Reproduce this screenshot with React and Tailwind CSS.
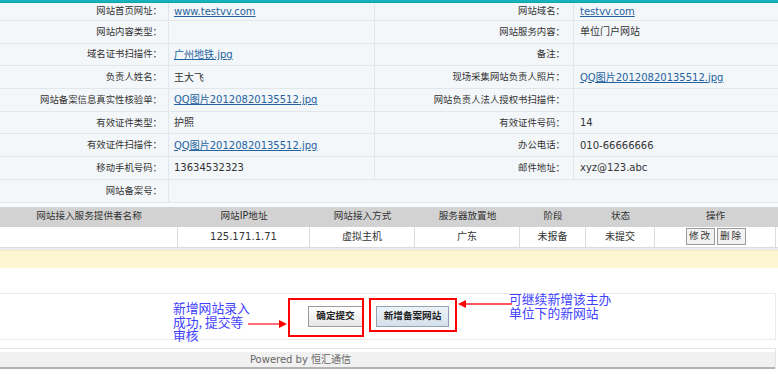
import React from 'react'

const rows = [
  { l1: '网站首页网址：', v1: 'www.testvv.com', link1: true, l2: '网站域名：', v2: 'testvv.com', link2: true },
  { l1: '网站内容类型：', v1: '', l2: '网站服务内容：', v2: '单位门户网站' },
  { l1: '域名证书扫描件：', v1: '广州地铁.jpg', link1: true, l2: '备注：', v2: '' },
  { l1: '负责人姓名：', v1: '王大飞', l2: '现场采集网站负责人照片：', v2: 'QQ图片20120820135512.jpg', link2: true },
  { l1: '网站备案信息真实性核验单：', v1: 'QQ图片20120820135512.jpg', link1: true, l2: '网站负责人法人授权书扫描件：', v2: '' },
  { l1: '有效证件类型：', v1: '护照', l2: '有效证件号码：', v2: '14' },
  { l1: '有效证件扫描件：', v1: 'QQ图片20120820135512.jpg', link1: true, l2: '办公电话：', v2: '010-66666666' },
  { l1: '移动手机号码：', v1: '13634532323', l2: '邮件地址：', v2: 'xyz@123.abc' },
]

function Val({ text, link }) {
  if (!text) return null
  return link
    ? <a className="text-[#25639f] underline underline-offset-1">{text}</a>
    : <span>{text}</span>
}

const cols = [
  { w: 'w-[178px]', head: '网站接入服务提供者名称', val: '' },
  { w: 'w-[132px]', head: '网站IP地址', val: '125.171.1.71' },
  { w: 'w-[105px]', head: '网站接入方式', val: '虚拟主机' },
  { w: 'w-[105px]', head: '服务器放置地', val: '广东' },
  { w: 'w-[66px]', head: '阶段', val: '未报备' },
  { w: 'w-[69px]', head: '状态', val: '未提交' },
]

export default function App() {
  return (
    <div
      className="relative w-[778px] h-[375px] overflow-hidden bg-white text-[10px] text-[#333]"
      style={{ fontFamily: '"DejaVu Sans", "Noto Sans CJK SC", sans-serif' }}
    >
      <div className="h-[3px] bg-[#17b3bb] border-b border-[#12a2aa]" />

      {/* 基本信息 */}
      <div className="bg-[#f3f7fa]">
        {rows.map((r, i) => (
          <div key={i} className={`flex border-b border-[#e2e7eb] ${i === 0 ? 'h-[18px]' : 'h-[22.7px]'}`}>
            <div className="w-[169px] shrink-0 flex items-center justify-end pr-[6px] border-r border-[#e2e7eb] text-[9.4px]">{r.l1}</div>
            <div className="w-[206px] shrink-0 flex items-center pl-[5px] border-r border-[#e2e7eb]"><Val text={r.v1} link={r.link1} /></div>
            <div className="w-[199px] shrink-0 flex items-center justify-end pr-[8px] border-r border-[#e2e7eb] text-[9.4px]">{r.l2}</div>
            <div className="flex-1 flex items-center pl-[6px]"><Val text={r.v2} link={r.link2} /></div>
          </div>
        ))}
        <div className="flex h-[22.7px] border-b border-[#e2e7eb]">
          <div className="w-[169px] shrink-0 flex items-center justify-end pr-[6px] border-r border-[#e2e7eb] text-[9.4px]">网站备案号：</div>
          <div className="flex-1" />
        </div>
      </div>
      <div className="h-[4px] bg-[#f8fafc]" />

      {/* 接入信息 */}
      <div className="flex h-[20px] bg-[#d2d2d2] pr-[2px] text-[9.6px]">
        {cols.map(c => (
          <div key={c.head} className={`${c.w} shrink-0 flex items-center justify-center`}>{c.head}</div>
        ))}
        <div className="flex-1 flex items-center justify-center">操作</div>
      </div>
      <div className="flex h-[21px] bg-white border-b border-[#dcdcdc] pr-[2px]">
        {cols.map(c => (
          <div key={c.head} className={`${c.w} shrink-0 flex items-center justify-center border-r border-[#dcdcdc]`}>{c.val}</div>
        ))}
        <div className="flex-1 flex items-center justify-center gap-[2px] border-r border-[#dcdcdc] pl-[2px]">
          <button className="w-[29px] h-[17px] border border-[#9a9a9a] bg-[#f2f2f2] text-[9.6px] tracking-[2px] text-[#333]">修改</button>
          <button className="w-[29px] h-[17px] border border-[#9a9a9a] bg-[#f2f2f2] text-[9.6px] tracking-[2px] text-[#333]">删除</button>
        </div>
      </div>
      <div className="h-[2px] bg-[#ececec]" />
      <div className="h-[18px] bg-[#fdf7d1] border-t border-[#f4ecc4]" />

      {/* 操作按钮 */}
      <div className="h-[25px]" />
      <div className="h-[47px] w-[776px] border border-l-0 border-[#ebebeb] flex pl-[308px] pt-[12px] gap-[13px]">
        <button className="w-[55px] h-[21px] border border-[#9c9c9c] bg-gradient-to-b from-white to-[#e6e6e6] font-bold text-[9.6px] text-[#222]">确定提交</button>
        <button className="w-[73px] h-[21px] border border-[#8fa3b3] bg-gradient-to-b from-[#eef4f8] to-[#d3e0ea] font-bold text-[9.6px] text-[#222]">新增备案网站</button>
      </div>
      <div className="h-[8px]" />
      <div className="w-[776px] border-t border-r border-[#e6e6e6] pt-[3px]">
        <div className="h-[17px] bg-[#f1f1f1] border-b-2 border-[#b3b3b3] flex items-center justify-center pr-[174px] text-[#666]">
          Powered by 恒汇通信
        </div>
      </div>

      {/* 标注 */}
      <div className="absolute left-[288px] top-[298px] w-[76px] h-[39px] border-[2.5px] border-[#ff0000]" />
      <div className="absolute left-[369px] top-[298px] w-[88px] h-[34px] border-[2.5px] border-[#ff0000]" />
      <div
        className="absolute left-[173px] top-[301px] text-[12.8px] leading-[13.5px] text-[#4141ff]"
        style={{ fontFamily: '"Noto Sans CJK SC", sans-serif' }}
      >
        <div>新增网站录入</div>
        <div>成功, 提交等</div>
        <div>审核</div>
      </div>
      <div
        className="absolute left-[509px] top-[292px] text-[12.8px] leading-[13.5px] text-[#4141ff]"
        style={{ fontFamily: '"Noto Sans CJK SC", sans-serif' }}
      >
        <div>可继续新增该主办</div>
        <div>单位下的新网站</div>
      </div>
      <svg className="absolute left-[246px] top-[319px]" width="42" height="10" viewBox="0 0 42 10">
        <line x1="2" y1="5" x2="34" y2="5" stroke="#f23" strokeWidth="1.3" />
        <polygon points="33,1 41,5 33,9" fill="#f00" />
      </svg>
      <svg className="absolute left-[456px] top-[299px]" width="58" height="10" viewBox="0 0 58 10">
        <line x1="9" y1="5" x2="56" y2="5" stroke="#f23" strokeWidth="1.3" />
        <polygon points="10,1 2,5 10,9" fill="#f00" />
      </svg>
    </div>
  )
}
